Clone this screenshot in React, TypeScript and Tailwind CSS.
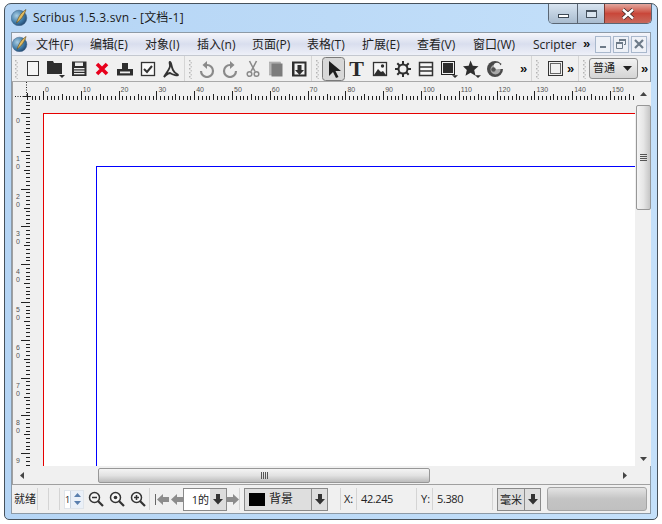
import React from "react";

const Logo = ({ s = 17 }: { s?: number }) => (
  <svg width={s} height={s} viewBox="0 0 17 17">
    <defs>
      <radialGradient id="lg" cx="35%" cy="35%" r="75%">
        <stop offset="0" stopColor="#a9cde2" />
        <stop offset="0.6" stopColor="#3f7aa6" />
        <stop offset="1" stopColor="#1d3f66" />
      </radialGradient>
    </defs>
    <circle cx="8" cy="9" r="7.800" fill="url(#lg)" stroke="#3c5f80" strokeWidth="0.500" />
    <path d="M15 0.500 C11 3 7.500 7 5.500 14 C9.500 11 13.500 6.500 15 0.500 Z" fill="#e0bb60" stroke="#5a4418" strokeWidth="0.600" />
  </svg>
);

const Grip = ({ className = "" }: { className?: string }) => (
  <svg width="3" height="20" viewBox="0 0 3 20" className={className}>
    {[1, 5, 9, 13, 17].map((y) => (
      <g key={y}>
        <rect x="0" y={y} width="1.500" height="1.500" fill="#b4b4b4" />
        <rect x="1.500" y={y + 2} width="1.500" height="1.500" fill="#c8c8c8" />
      </g>
    ))}
  </svg>
);

const Chevrons = () => (
  <span className="text-[13px] font-bold leading-none text-[#111] [font-family:'Liberation_Sans',sans-serif]">»</span>
);

const I = ({ children }: { children: React.ReactNode }) => (
  <svg width="18" height="18" viewBox="0 0 18 18">{children}</svg>
);

const d = "#2e2e2e";
const g = "#8a8a8a";

const toolsA = [
  <I><rect x="3.500" y="1.500" width="11" height="14" fill="#f4f4f4" stroke="#333" /></I>,
  <I><path d="M0 1h6l1 2h8v11H0z" fill={d} /><path d="M12 15h6l-3 3z" fill={d} /></I>,
  <I><rect x="2" y="1.500" width="14.500" height="14.500" fill={d} /><rect x="5" y="2.500" width="8" height="3.500" fill="#eee" /><rect x="4" y="8" width="10.500" height="1.300" fill="#eee" /><rect x="4" y="10.500" width="10.500" height="1.300" fill="#eee" /><rect x="4" y="13" width="10.500" height="1.300" fill="#eee" /></I>,
  <I><path d="M4 4l10 10M14 4L4 14" stroke="#e8001c" strokeWidth="3.600" /></I>,
  <I><path d="M6 3h6v6h5v6.500H1V9h5z" fill={d} /><rect x="4" y="11.500" width="10" height="1.800" fill="#eee" /></I>,
  <I><rect x="2.500" y="2.500" width="13" height="13" fill="#fafafa" stroke="#333" strokeWidth="1.300" /><path d="M5 9l3 3 5-6" fill="none" stroke="#333" strokeWidth="2" /></I>,
  <I><path d="M8 2c1.500 0 1 4 3 8s5 4 5 5-5 0-8-2c-2 0-4 2-6 4 2-4 6-8 6-11 0-2-1-4 0-4z" fill="none" stroke="#333" strokeWidth="1.800" /></I>,
];

const toolsB = [
  <I><path d="M9 5 A6 6 0 1 1 3 11" fill="none" stroke={g} strokeWidth="2.200" /><path d="M9 1v8L4.500 5z" fill={g} /></I>,
  <I><path d="M9 5 A6 6 0 1 0 15 11" fill="none" stroke={g} strokeWidth="2.200" /><path d="M9 1v8l4.500-4z" fill={g} /></I>,
  <I><path d="M5.500 1l5.500 10.500M12.500 1L7 11.500" stroke={g} strokeWidth="1.600" /><circle cx="5.500" cy="14" r="2.300" fill="none" stroke={g} strokeWidth="1.500" /><circle cx="12.500" cy="14" r="2.300" fill="none" stroke={g} strokeWidth="1.500" /></I>,
  <I><rect x="2.500" y="2" width="11" height="13" fill="#b4b4b4" stroke="#999" strokeWidth="0.500" /><rect x="4.500" y="3.500" width="11" height="13" fill="#7c7c7c" /></I>,
  <I><rect x="2" y="1.500" width="14.500" height="15" fill={d} /><rect x="4.500" y="3.500" width="10" height="11" fill="#f2f2f2" /><path d="M7.500 5h4v5h2.500l-4.500 5-4.500-5h2.500z" fill={d} /></I>,
];

const toolsC = [
  <svg width="23" height="24" viewBox="0 0 23 24" key="sel">
    <rect x="0.500" y="0.500" width="22" height="23" rx="3" fill="#d8d8d8" stroke="#7a7a7a" />
    <path d="M7 4v15l4-4 3 6 2.500-1-3-6h5.500z" fill="#1e1e1e" />
  </svg>,
  <span key="T" className="text-[22px] leading-none font-bold text-[#2a2a2a] [font-family:'Liberation_Serif',serif]">T</span>,
  <I><rect x="2.500" y="2.500" width="13" height="13" fill="#f6f6f6" stroke="#333" strokeWidth="1.300" /><circle cx="11.500" cy="6" r="1.700" fill={d} /><path d="M3 15l4-6 3 3 2-1 3 4z" fill={d} /></I>,
  <I><circle cx="9" cy="9" r="4.500" fill="none" stroke={d} strokeWidth="2" /><path d="M9 1v3M9 14v3M1 9h3M14 9h3M3.300 3.300l2.200 2.200M12.500 12.500l2.200 2.200M14.700 3.300l-2.200 2.200M5.500 12.500l-2.200 2.200" stroke={d} strokeWidth="2" /></I>,
  <I><rect x="2.500" y="2.500" width="13" height="13" fill="#f6f6f6" stroke="#333" strokeWidth="1.500" /><path d="M2.500 7h13M2.500 11h13" stroke="#333" strokeWidth="1.500" /></I>,
  <I><rect x="1.500" y="1.500" width="13" height="13" fill="#f0f0f0" stroke="#222" /><rect x="3" y="3" width="10" height="10" fill={d} /><path d="M12 15.200h6L15 18z" fill={d} /></I>,
  <I><path d="M7.500 0.500l2.300 5.300 5.700.5-4.300 3.800 1.300 5.600-5-3-5 3 1.300-5.600L0 6.300l5.700-.5z" fill={d} /><path d="M12 15.200h6L15 18z" fill={d} /></I>,
  <I>
    <circle cx="9" cy="9" r="8" fill="#4a4a4a" />
    <circle cx="9.500" cy="9.500" r="5" fill="#a8a8a8" />
    <path d="M9 9L18 2.500V9z" fill="#f0f0f0" />
    <circle cx="11" cy="6" r="3.200" fill="#f0f0f0" />
    <circle cx="7.500" cy="9.500" r="2.200" fill="#555" />
  </I>,
];

const menu: [string, number][] = [
  ["文件(F)", 54], ["编辑(E)", 55], ["对象(I)", 52], ["插入(n)", 55], ["页面(P)", 55],
  ["表格(T)", 55], ["扩展(E)", 55], ["查看(V)", 56], ["窗口(W)", 60], ["Scripter", 54],
];

const StatusSep = ({ w = 0 }: { w?: number }) => (
  <div className="h-[22px] w-px shrink-0 bg-[#d4d4d4]" style={w ? { marginLeft: w } : undefined} />
);

const DownArrow = ({ c = "#333" }: { c?: string }) => (
  <svg width="10" height="12" viewBox="0 0 10 12"><path d="M3 1h4v5h3l-5 5.500L0 6h3z" fill={c} /></svg>
);
const Side = ({ dir }: { dir: "l" | "r" }) => (
  <svg width="12" height="11" viewBox="0 0 12 11">
    <path d={dir === "l" ? "M0 5.500L6 0v3h6v5H6v3z" : "M12 5.500L6 0v3H0v5h6v3z"} fill="#8c8c8c" />
  </svg>
);
const Zoom = ({ kind }: { kind: "-" | "o" | "+" }) => (
  <svg width="16" height="16" viewBox="0 0 16 16">
    <circle cx="6.500" cy="6.500" r="5" fill="#f6f6f6" stroke="#333" strokeWidth="1.500" />
    <path d="M10 10l5 5" stroke="#333" strokeWidth="2.200" />
    {kind === "-" && <path d="M4 6.500h5" stroke="#333" strokeWidth="1.500" />}
    {kind === "o" && <circle cx="6.500" cy="6.500" r="1.800" fill="#333" />}
    {kind === "+" && <path d="M4 6.500h5M6.500 4v5" stroke="#333" strokeWidth="1.500" />}
  </svg>
);

const mdiIcons = [
  <svg width="10" height="10" viewBox="0 0 10 10" key="m"><rect x="2" y="7" width="6" height="2" fill="#6d7a88" /></svg>,
  <svg width="10" height="10" viewBox="0 0 10 10" key="r"><path d="M3.500 2.500V0.500h6v5H8M0.500 3.500h6v6h-6z" fill="none" stroke="#6d7a88" /><rect x="0" y="3" width="7" height="2" fill="#6d7a88" /><rect x="3" y="0" width="7" height="2" fill="#6d7a88" /></svg>,
  <svg width="10" height="10" viewBox="0 0 10 10" key="c"><path d="M1 1l8 8M9 1l-8 8" stroke="#6d7a88" strokeWidth="2.200" /></svg>,
];

const HRuler = () => {
  const ticks = [];
  for (let i = -3; i < 160; i++) {
    const x = Math.round(30 + i * 3.78) + 0.5;
    const m = ((i % 10) + 10) % 10;
    const top = m === 0 ? 9 : m === 5 ? 12 : 14;
    if (x < 622) ticks.push(<path key={i} d={`M${x} ${top}V18`} stroke="#222" />);
  }
  const labels = [];
  for (let n = 0; n <= 150; n += 10) {
    labels.push(
      <text key={n} x={30.5 + n * 3.78 + 1.5} y="10" fontSize="7" fill="#555" fontFamily="Liberation Sans">{n}</text>
    );
  }
  return (
    <svg width="622" height="20" className="block shrink-0">
      {ticks}
      {labels}
      <path d="M13.500 0V14M2 14.500H13" stroke="#222" strokeDasharray="1 1.500" />
      <path d="M10 14.500h8M14.500 11v7" stroke="#222" />
    </svg>
  );
};

const VRuler = () => {
  const ticks = [];
  for (let i = -3; i < 96; i++) {
    const y = Math.round(11 + i * 3.78) + 0.5;
    const m = ((i % 10) + 10) % 10;
    const left = m === 0 ? 8 : m === 5 ? 11 : 13;
    ticks.push(<path key={i} d={`M${left} ${y}H17`} stroke="#222" />);
  }
  const labels: React.ReactNode[] = [];
  for (let n = 0; n <= 90; n += 10) {
    const y = 11 + n * 3.78;
    String(n).split("").forEach((c, k) => {
      const ty = y + 10 + k * 8;
      if (ty < 362) {
        labels.push(
          <text key={`${n}-${k}`} x="3" y={ty} fontSize="7" fill="#555" fontFamily="Liberation Sans">{c}</text>
        );
      }
    });
  }
  return (
    <svg width="18" height="364" className="block shrink-0">
      {ticks}
      {labels}
    </svg>
  );
};

export default function App() {
  return (
    <div className="h-[524px] w-[662px] overflow-hidden bg-white pl-[4px] pt-[3px] text-[12px] text-[#222] [font-family:'Open_Sans','Noto_Sans_CJK_SC',sans-serif]">
      <div className="flex h-[517px] w-[654px] flex-col rounded-t-[7px] rounded-b-[5px] border border-[#47525c] bg-gradient-to-r from-[#b5d5f5] via-[#bcdaf7] to-[#c4e0fa] px-[6px] pb-[5px]">
        {/* title */}
        <div className="relative flex h-[28px] shrink-0 items-center pb-[1px]">
          <Logo s={17} />
          <span className="ml-[5px] text-[12px] tracking-[0.2px] text-[#1a1a1a]">Scribus 1.5.3.svn - [文档-1]</span>
          <div className="ml-auto mr-[-1px] flex h-[20px] self-start overflow-hidden rounded-b-[5px] border border-t-0 border-[#5a6674]">
            <div className="flex w-[28px] items-end justify-center bg-gradient-to-b from-[#d8e4f0] to-[#a9bccf] pb-[5px]">
              <div className="h-[4px] w-[11px] border border-[#3d4955] bg-white" />
            </div>
            <div className="flex w-[27px] items-center justify-center border-l border-[#5a6674] bg-gradient-to-b from-[#d8e4f0] to-[#a9bccf]">
              <div className="h-[8px] w-[11px] border border-t-[2px] border-[#46525e] bg-[#dbe6f0]" />
            </div>
            <div className="flex w-[47px] items-center justify-center border-l border-[#7a3a32] bg-gradient-to-b from-[#e2a79f] via-[#c9473a] to-[#c8695c]">
              <svg width="16" height="12" viewBox="0 0 16 12"><path d="M3 1.500l10 9M13 1.500l-10 9" stroke="#3d2a28" strokeWidth="4" /><path d="M3 1.500l10 9M13 1.500l-10 9" stroke="#fff" strokeWidth="2.400" /></svg>
            </div>
          </div>
        </div>

        {/* client */}
        <div className="flex min-h-0 flex-1 flex-col border border-[#8d9aa6] bg-[#f0f0f0]">
          {/* menu */}
          <div className="flex h-[22px] shrink-0 items-center bg-gradient-to-b from-[#f5f6fb] via-[#d9deee] to-[#eef0f8]">
            <div className="flex w-[16px] shrink-0 items-center justify-center"><Logo s={16} /></div>
            {menu.map(([t, w]) => (
              <div key={t} className="whitespace-nowrap pl-[8px] pt-[1px]" style={{ width: w }}>{t}</div>
            ))}
            <div className="ml-[4px] w-[8px]"><Chevrons /></div>
            <div className="ml-[4px] flex items-center gap-[2px]">
              {mdiIcons.map((c, i) => (
                <div key={i} className="flex h-[17px] w-[16px] items-center justify-center border border-[#a9b8cc] bg-[#eef1f7]">
                  {c}
                </div>
              ))}
            </div>
          </div>

          {/* toolbar */}
          <div className="flex h-[27px] shrink-0 items-center border-b border-[#a9a9a9] border-t border-t-[#c4c8d0] bg-[#f0f0f0]">
            <div className="flex h-full w-[173px] shrink-0 items-center border-r border-[#d5d5d5]">
              <div className="flex w-[9px] justify-center"><Grip /></div>
              {toolsA.map((t, i) => <div key={i} className="flex w-[23px] items-center justify-center">{t}</div>)}
            </div>
            <div className="flex h-full w-[127px] shrink-0 items-center border-r border-[#d5d5d5]">
              <div className="flex w-[10px] justify-center"><Grip /></div>
              {toolsB.map((t, i) => <div key={i} className="flex w-[23px] items-center justify-center">{t}</div>)}
            </div>
            <div className="flex h-full w-[220px] shrink-0 items-center border-r border-[#d5d5d5]">
              <div className="flex w-[10px] justify-center"><Grip /></div>
              {toolsC.map((t, i) => <div key={i} className="flex w-[23px] items-center justify-center">{t}</div>)}
              <div className="ml-[14px]"><Chevrons /></div>
            </div>
            <div className="flex h-full w-[47px] shrink-0 items-center border-r border-[#d5d5d5]">
              <div className="flex w-[10px] justify-center"><Grip /></div>
              <div className="ml-[4px] flex w-[18px] justify-center"><div className="flex h-[15px] w-[15px] items-center justify-center border border-[#333]"><div className="h-[11px] w-[11px] border border-[#666]" /></div></div>
              <div className="ml-[3px]"><Chevrons /></div>
            </div>
            <div className="flex h-full flex-1 items-center">
              <div className="flex w-[10px] justify-center"><Grip /></div>
              <div className="flex h-[21px] w-[49px] items-center justify-between rounded-[3px] border border-[#8e8e8e] bg-gradient-to-b from-[#f2f2f2] to-[#d4d4d4] pl-[3px] pr-[5px] text-[11px]">
                <span>普通</span>
                <svg width="9" height="5" viewBox="0 0 9 5"><path d="M0 0h9L4.500 5z" fill="#222" /></svg>
              </div>
              <div className="ml-[3px]"><Chevrons /></div>
            </div>
          </div>

          {/* canvas + v scrollbar */}
          <div className="flex h-[384px] shrink-0">
            <div className="flex w-[623px] shrink-0 flex-col overflow-hidden border-l border-[#a0a0a0]">
              <HRuler />
              <div className="flex min-h-0 flex-1">
                <VRuler />
                <div className="min-w-0 flex-1 pl-[12px] pt-[11px]">
                  <div className="h-[400px] border-l border-t border-[#e60000] bg-white pl-[52px] pt-[52px]">
                    <div className="h-[400px] border-l border-t border-[#0000ff]" />
                  </div>
                </div>
              </div>
            </div>
            <div className="flex w-[16px] shrink-0 flex-col items-center bg-[#f0f0f0]">
              <div className="flex h-[23px] items-center justify-center">
                <svg width="7" height="4" viewBox="0 0 7 4"><path d="M3.500 0L7 4H0z" fill="#444" /></svg>
              </div>
              <div className="flex h-[105px] w-[15px] items-center justify-center rounded-[2px] border border-[#979797] bg-gradient-to-r from-[#f4f4f4] via-[#e6e6e6] to-[#c6c6c6]">
                <div className="flex flex-col gap-[1px]">
                  {[0, 1, 2, 3].map((k) => <div key={k} className="h-[1px] w-[7px] bg-[#555]" />)}
                </div>
              </div>
              <div className="flex-1" />
              <div className="flex h-[14px] items-center justify-center">
                <svg width="7" height="4" viewBox="0 0 7 4"><path d="M0 0h7L3.500 4z" fill="#444" /></svg>
              </div>
            </div>
          </div>

          {/* h scrollbar */}
          <div className="flex h-[18px] shrink-0 items-center border-l border-[#a0a0a0] bg-[#f0f0f0]">
            <div className="flex w-[17px] justify-center"><svg width="4" height="7" viewBox="0 0 4 7"><path d="M4 0v7L0 3.500z" fill="#444" /></svg></div>
            <div className="ml-[68px] flex h-[15px] w-[332px] items-center justify-center rounded-[2px] border border-[#979797] bg-gradient-to-b from-[#f4f4f4] via-[#e2e2e2] to-[#bcbcbc]">
              <div className="flex gap-[1px]">
                {[0, 1, 2, 3].map((k) => <div key={k} className="h-[7px] w-[1px] bg-[#555]" />)}
              </div>
            </div>
            <div className="ml-[191px] flex w-[8px] justify-center"><svg width="4" height="7" viewBox="0 0 4 7"><path d="M0 0v7l4-3.500z" fill="#444" /></svg></div>
          </div>

          {/* status */}
          <div className="flex min-h-0 flex-1 items-center border-t border-[#a0a0a0] bg-[#f0f0f0] pl-[2px]">
            <span className="w-[23px] shrink-0 text-[11px]">就绪</span>
            <StatusSep />
            <StatusSep w={10} />
            <StatusSep w={10} />
            <div className="ml-[4px] flex h-[19px] w-[20px] shrink-0 items-center border border-[#dfe4ea] bg-white text-[9px] leading-none">
              <span className="w-[5px] text-center">1</span>
              <div className="flex h-full flex-1 flex-col items-center justify-around border-l border-[#c8d2de] bg-[#eaf0f8]">
                <svg width="7" height="4" viewBox="0 0 7 4"><path d="M3.500 0L7 4H0z" fill="#5a7fae" /></svg>
                <svg width="7" height="4" viewBox="0 0 7 4"><path d="M0 0h7L3.500 4z" fill="#5a7fae" /></svg>
              </div>
            </div>
            <div className="ml-[4px] flex w-[58px] shrink-0 justify-between">
              <Zoom kind="-" /><Zoom kind="o" /><Zoom kind="+" />
            </div>
            <StatusSep w={3} />
            <div className="ml-[5px] flex shrink-0 items-center">
              <div className="mr-[1px] h-[11px] w-[1px] bg-[#666]" />
              <Side dir="l" />
              <div className="ml-[2px]"><Side dir="l" /></div>
            </div>
            <div className="flex h-[23px] w-[44px] shrink-0 items-stretch border border-[#8a8a8a] bg-white">
              <div className="flex-1 pr-[1px] text-right text-[11px] leading-[21px]">1的</div>
              <div className="flex w-[16px] items-center justify-center bg-[#dcdcdc]"><DownArrow /></div>
            </div>
            <div className="shrink-0"><Side dir="r" /></div>
            <StatusSep />
            <div className="ml-[4px] flex h-[23px] w-[84px] shrink-0 items-stretch border border-[#8a8a8a] bg-[#dedede]">
              <div className="flex flex-1 items-center pl-[4px]">
                <div className="h-[13px] w-[16px] bg-black" />
                <span className="ml-[4px] text-[12px]">背景</span>
              </div>
              <div className="flex w-[16px] items-center justify-center border-l border-[#8a8a8a]"><DownArrow /></div>
            </div>
            <StatusSep w={12} />
            <span className="ml-[3px] w-[12px] shrink-0 text-[11px]">X:</span>
            <StatusSep />
            <span className="ml-[4px] w-[55px] shrink-0 text-[11px] tracking-[-0.4px]">42.245</span>
            <StatusSep />
            <span className="ml-[4px] w-[11px] shrink-0 text-[11px]">Y:</span>
            <StatusSep />
            <span className="ml-[4px] w-[55px] shrink-0 text-[11px] tracking-[-0.4px]">5.380</span>
            <StatusSep />
            <div className="ml-[4px] flex h-[23px] w-[44px] shrink-0 items-stretch border border-[#8a8a8a] bg-[#dedede]">
              <div className="flex-1 pl-[2px] text-[11px] leading-[21px]">毫米</div>
              <div className="flex w-[16px] items-center justify-center border-l border-[#8a8a8a]"><DownArrow /></div>
            </div>
            <div className="ml-[6px] h-[24px] w-[100px] shrink-0 rounded-[3px] border border-[#a4a4a4] bg-gradient-to-b from-[#e4e4e4] via-[#c4c4c4] to-[#c0c0c0]" />
          </div>
        </div>
      </div>
    </div>
  );
}
